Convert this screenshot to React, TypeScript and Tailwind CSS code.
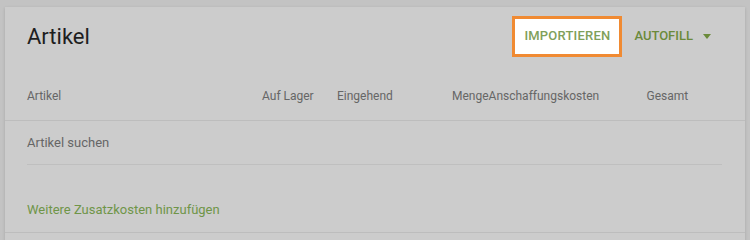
export default function App() {
  return (
    <div className="h-[240px] w-[750px] overflow-hidden bg-[#c3c3c3] pl-[5px] pt-[7px] font-['Roboto',sans-serif]">
      <div className="w-[740px] bg-[#cccccc] shadow-[0_1px_3px_rgba(0,0,0,0.15)]">
        <div className="flex h-[58px] items-center justify-between pl-[22px] pr-[34px]">
          <h1 className="text-[22px] text-[#1f1f1f]">Artikel</h1>
          <div className="flex items-center">
            <button className="flex h-[41px] w-[110px] items-center justify-center border-[3px] border-[#f08a32] bg-white text-[13px] font-medium tracking-[0.2px] text-[#7fa05a]">
              IMPORTIEREN
            </button>
            <button className="ml-[12px] flex items-center text-[13px] font-medium text-[#6b8a3a]">
              AUTOFILL
              <span className="ml-[10px] h-0 w-0 border-x-[4.5px] border-t-[5px] border-x-transparent border-t-[#6b8a3a]" />
            </button>
          </div>
        </div>
        <div className="flex h-[56px] items-center border-b border-[#bdbdbd] pl-[22px] pt-[6px] text-[12px] text-[#666666]">
          <span className="w-[235px]">Artikel</span>
          <span className="w-[75px]">Auf Lager</span>
          <span className="w-[115px]">Eingehend</span>
          <span className="whitespace-nowrap">Menge</span>
          <span className="w-[158px] whitespace-nowrap">Anschaffungskosten</span>
          <span>Gesamt</span>
        </div>
        <div className="pl-[22px] pr-[23px]">
          <div className="flex h-[44px] items-center border-b border-[#bfbfbf] pt-[1px] text-[13px] text-[#666666]">
            Artikel suchen
          </div>
        </div>
        <div className="flex h-[68px] items-center border-b border-[#bdbdbd] pl-[22px] pt-[22px] text-[13px] text-[#6f9548]">
          Weitere Zusatzkosten hinzufügen
        </div>
        <div className="h-[10px]" />
      </div>
    </div>
  );
}
